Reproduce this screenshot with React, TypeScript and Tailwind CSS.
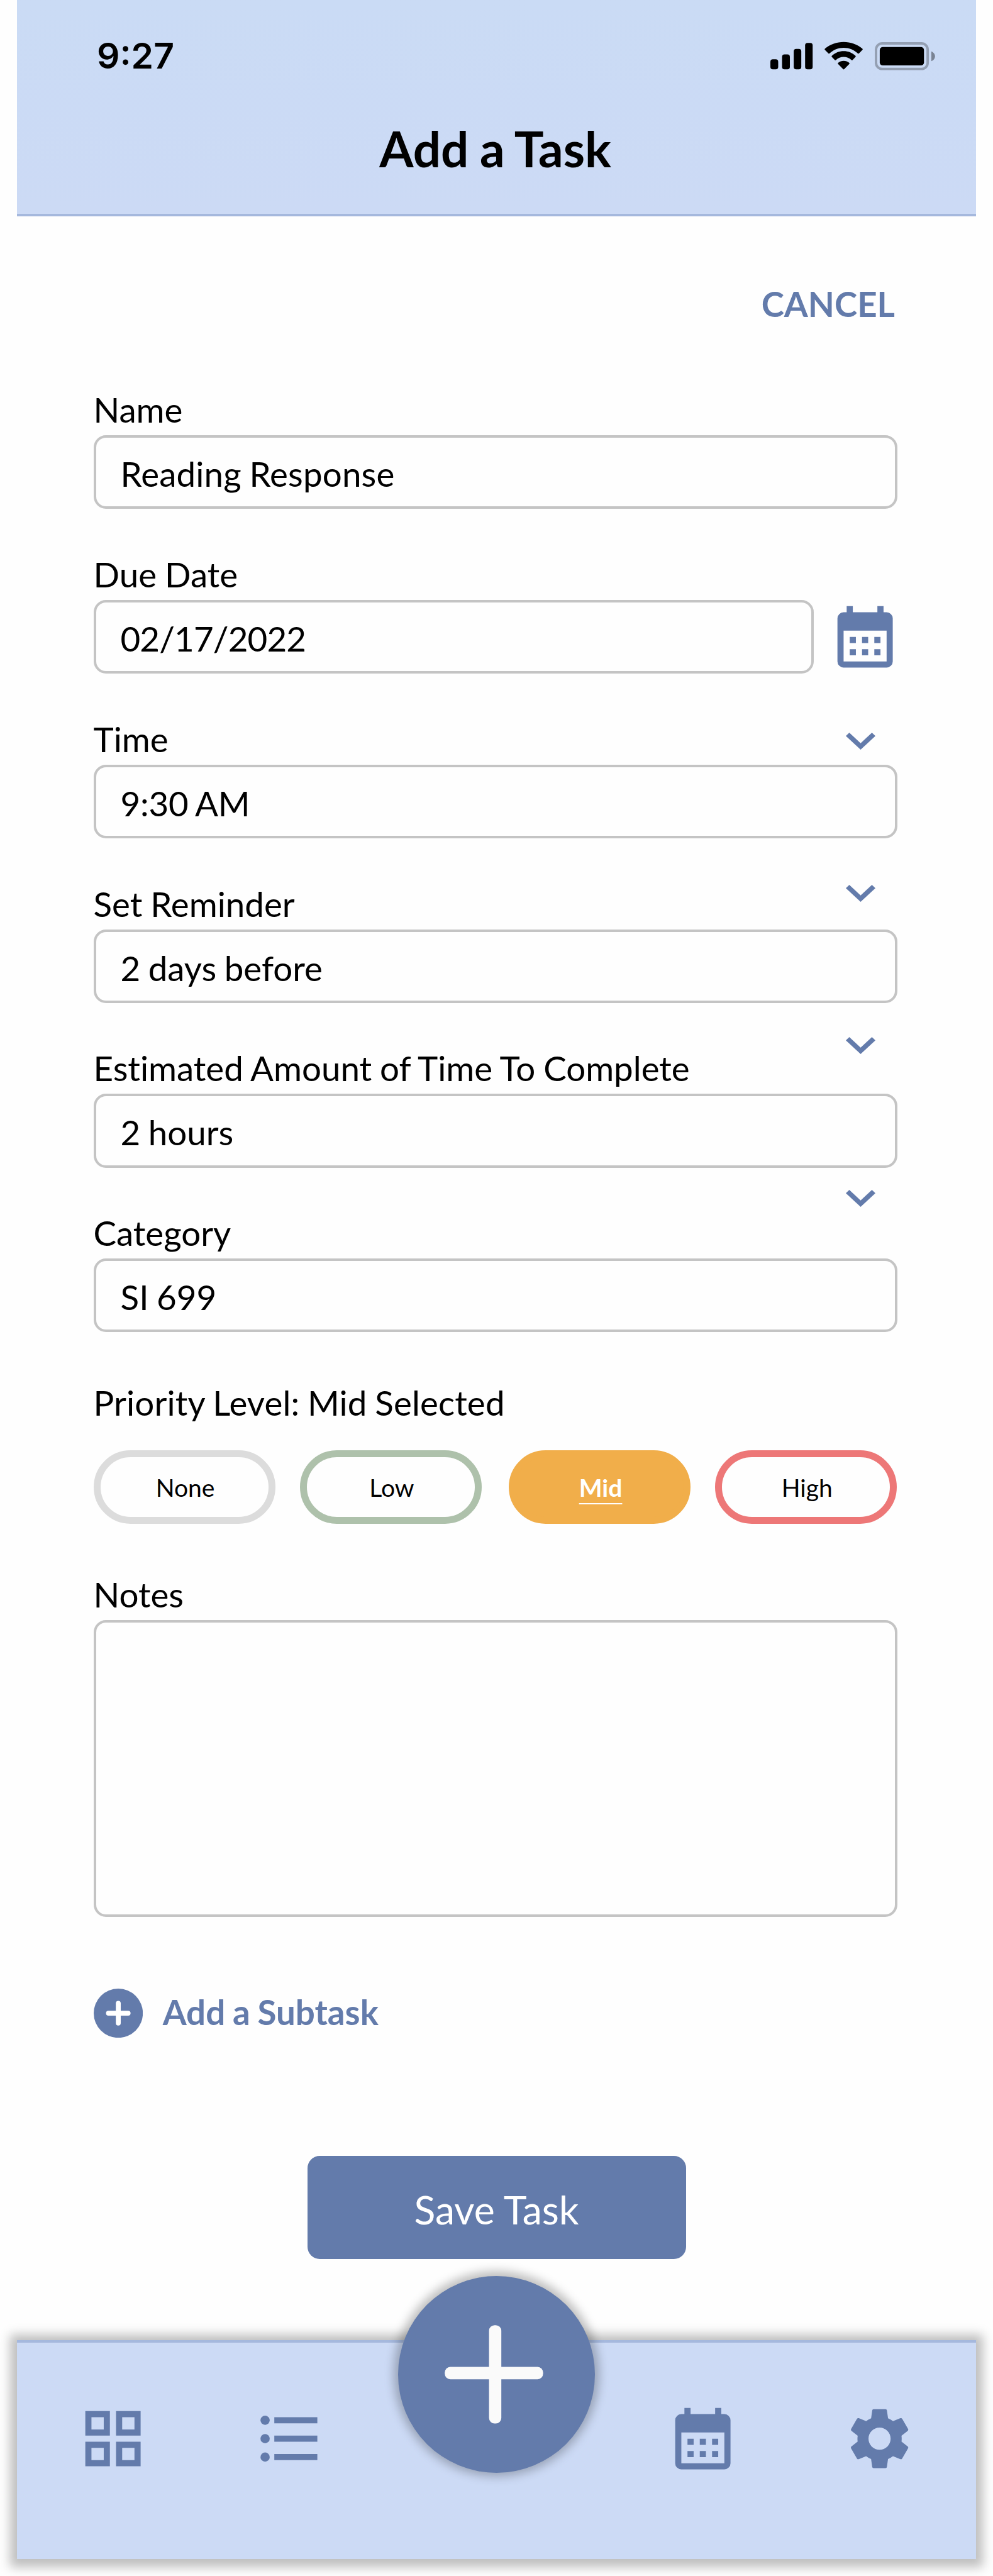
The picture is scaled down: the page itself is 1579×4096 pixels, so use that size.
import type { ReactNode } from "react";

const BLUE = "#637bab";

function Chevron({ className }: { className: string }) {
  return (
    <svg
      viewBox="6 8.59 12 7.41"
      preserveAspectRatio="none"
      fill={BLUE}
      className={`absolute left-[1196px] h-[27px] w-[47px] ${className}`}
    >
      <path d="M7.41 8.59 12 13.17l4.59-4.58L18 10l-6 6-6-6z" />
    </svg>
  );
}

function CalendarIcon() {
  return (
    <svg viewBox="0 0 24 24" fill={BLUE} fillRule="evenodd" className="size-[117.25px] shrink-0">
      <path d="M6 2h2v2h8V2h2v2h1a2 2 0 0 1 2 2v14a2 2 0 0 1-2 2H5a2 2 0 0 1-2-2V6a2 2 0 0 1 2-2h1zM5 10v10h14V10zM7 12h2v2H7zM11 12h2v2h-2zM15 12h2v2h-2zM7 16h2v2H7zM11 16h2v2h-2zM15 16h2v2h-2z" />
    </svg>
  );
}

function GridIcon() {
  return (
    <svg viewBox="0 0 24 24" fill={BLUE} fillRule="evenodd" className="size-[117.25px]">
      <path d="M3 3h8v8H3zM5 5v4h4V5zM13 3h8v8h-8zM15 5v4h4V5zM3 13h8v8H3zM5 15v4h4v-4zM13 13h8v8h-8zM15 15v4h4v-4z" />
    </svg>
  );
}

function ListIcon() {
  return (
    <svg viewBox="0 0 24 24" fill={BLUE} className="size-[117.25px]">
      <circle cx="4" cy="6" r="1.5" />
      <circle cx="4" cy="12" r="1.5" />
      <circle cx="4" cy="18" r="1.5" />
      <path d="M7 5h14v2H7zM7 11h14v2H7zM7 17h14v2H7z" />
    </svg>
  );
}

function GearIcon() {
  return (
    <svg viewBox="0 0 24 24" fill={BLUE} className="size-[117.25px]">
      <path d="M19.14 12.94c.04-.3.06-.61.06-.94 0-.32-.02-.64-.07-.94l2.03-1.58c.18-.14.23-.41.12-.61l-1.92-3.32c-.12-.22-.37-.29-.59-.22l-2.39.96c-.5-.38-1.03-.7-1.62-.94l-.36-2.54c-.04-.24-.24-.41-.48-.41h-3.84c-.24 0-.43.17-.47.41l-.36 2.54c-.59.24-1.13.57-1.62.94l-2.39-.96c-.22-.08-.47 0-.59.22L2.74 8.87c-.12.21-.08.47.12.61l2.03 1.58c-.05.3-.09.63-.09.94s.02.64.07.94l-2.03 1.58c-.18.14-.23.41-.12.61l1.92 3.32c.12.22.37.29.59.22l2.39-.96c.5.38 1.03.7 1.62.94l.36 2.54c.05.24.24.41.48.41h3.84c.24 0 .44-.17.47-.41l.36-2.54c.59-.24 1.13-.56 1.62-.94l2.39.96c.22.08.47 0 .59-.22l1.92-3.32c.12-.22.07-.47-.12-.61l-2.01-1.58zM12 15.6c-1.98 0-3.6-1.62-3.6-3.6s1.62-3.6 3.6-3.6 3.6 1.62 3.6 3.6-1.62 3.6-3.6 3.6z" />
    </svg>
  );
}

function StatusIcons() {
  return (
    <svg viewBox="1254 68 270 48" className="h-[46.9px] w-[263.8px]">
      <rect x="1254" y="97" width="12.7" height="16.3" rx="4" />
      <rect x="1273" y="89" width="12.7" height="24.3" rx="4" />
      <rect x="1292" y="80" width="12.3" height="33.3" rx="4" />
      <rect x="1310.5" y="70.3" width="12.3" height="43" rx="4" />
      <path d="M1373.3 78.2c8.6 0 16.9 3.3 23.1 9.2.5.4 1.2.4 1.7 0l5.8-5.9c.5-.5.5-1.3 0-1.8-17.1-14.5-44.1-14.5-61.2 0-.5.5-.5 1.3 0 1.8l5.8 5.9c.5.4 1.2.4 1.7 0 6.2-5.9 14.5-9.2 23.1-9.2z" />
      <path d="M1373.3 93.2c4.7 0 9.2 1.7 12.7 4.9.5.5 1.3.5 1.7 0l4.9-5c.5-.5.5-1.3 0-1.8-10.9-10.1-27.7-10.1-38.6 0-.5.5-.5 1.3 0 1.8l4.9 5c.4.5 1.2.5 1.7 0 3.5-3.2 8-4.9 12.7-4.9z" />
      <path d="M1382.4 104.5c.5-.5.5-1.3 0-1.7-5.3-4.3-12.9-4.3-18.2 0-.5.4-.5 1.2 0 1.7l8.3 8.6c.5.5 1.2.5 1.6 0z" />
      <rect x="1426" y="71" width="84" height="41.7" rx="10" fill="none" stroke="#000" strokeOpacity=".27" strokeWidth="4" />
      <path d="M1516 84v16c3.5-1.3 6-4.5 6-8s-2.5-6.7-6-8z" fillOpacity=".4" />
      <rect x="1432" y="77" width="72" height="30" rx="5" />
    </svg>
  );
}

type FieldProps = { label: string; value: string; valueClass?: string; trailing?: ReactNode };

function Field({ label, value, valueClass = "", trailing }: FieldProps) {
  return (
    <div className="h-[261.85px]">
      <div className="h-[98px] text-[54.7px] leading-[114px] [word-spacing:-1px]">{label}</div>
      <div className="flex gap-[23.4px]">
        <div
          className={`h-[117.2px] flex-1 rounded-[19.5px] border-4 border-[#c4c4c4] pl-[39px] text-[54.7px] leading-[115px] ${valueClass}`}
        >
          {value}
        </div>
        {trailing}
      </div>
    </div>
  );
}

const PILL =
  "flex h-[117.2px] w-[289.2px] items-center justify-center rounded-full border-[11.7px] pl-[3px] text-[39.1px] leading-[39px]";

export default function App() {
  return (
    <div className="flex h-[4096px] w-[1579px] flex-col overflow-hidden bg-[#fefefe] font-['Lato',sans-serif] text-black [font-variant-ligatures:no-common-ligatures] [word-spacing:-1.5px]">
      <header className="mx-[27.4px] h-[344px] shrink-0 border-b-4 border-[#a5b8dd] bg-linear-to-b from-[#cadbf5] to-[#ccdaf5]">
        <div className="flex h-[176px] items-start justify-between pl-[126.6px] pr-[62.5px]">
          <div className="pt-[58px] font-['Inter',sans-serif] text-[57px] font-semibold leading-[62px]">9:27</div>
          <div className="pt-[66.4px]">
            <StatusIcons />
          </div>
        </div>
        <h1 className="mt-[21px] pr-[4px] text-center text-[78.2px] font-bold leading-[78px]">Add a Task</h1>
      </header>

      <main className="relative mx-[148.5px] w-[1278px] grow">
        <div className="flex h-[250px] justify-end pt-[109px] pr-[3.5px] text-[54.7px] font-bold leading-[60px] text-[#637bab]">
          CANCEL
        </div>
        <Field label="Name" value="Reading Response" valueClass="tracking-[0.15px]" />
        <Field
          label="Due Date"
          value="02/17/2022"
          valueClass="tracking-[-0.85px]"
          trailing={
            <div className="-mr-[8px] w-[117.25px]">
              <CalendarIcon />
            </div>
          }
        />
        <Field label="Time" value="9:30 AM" valueClass="tracking-[-0.2px]" />
        <Field label="Set Reminder" value="2 days before" />
        <Field label="Estimated Amount of Time To Complete" value="2 hours" />
        <Field label="Category" value="SI 699" />
        <Chevron className="top-[821px]" />
        <Chevron className="top-[1063px]" />
        <Chevron className="top-[1305px]" />
        <Chevron className="top-[1548px]" />

        <div className="h-[140.8px] text-[54.7px] leading-[130px] tracking-[0.15px]">Priority Level: Mid Selected</div>
        <div className="flex">
          <button className={`${PILL} mr-[39.1px] border-[#dcdcdc]`}>None</button>
          <button className={`${PILL} mr-[43px] border-[#aec1ab]`}>Low</button>
          <button
            className={`${PILL} mr-[39.1px] border-[#f1ae4a] bg-[#f1ae4a] font-bold text-white underline decoration-[2px] underline-offset-[10px]`}
          >
            Mid
          </button>
          <button className={`${PILL} border-[#ed7777]`}>High</button>
        </div>

        <div className="mt-[54.5px] h-[98px] text-[54.7px] leading-[114px]">Notes</div>
        <div className="h-[472.9px] rounded-[19.5px] border-4 border-[#c4c4c4]" />

        <div className="mt-[113.4px] flex h-[78.2px] items-center gap-[32px] text-[54.7px] font-bold text-[#637bab]">
          <svg viewBox="0 0 80 80" className="size-[78.2px]">
            <circle cx="40" cy="40" r="40" fill={BLUE} />
            <path d="M40 24v32M24 40h32" stroke="#fff" strokeWidth="8" strokeLinecap="round" />
          </svg>
          <span className="pb-[4px]">Add a Subtask</span>
        </div>

        <button className="mt-[187.6px] ml-[340px] flex h-[164px] w-[602px] items-center justify-center rounded-[19.5px] bg-[#637bab] pt-[6px] text-[62.5px] text-white">
          Save Task
        </button>
      </main>

      <nav className="relative mx-[27.4px] mb-[27.4px] flex h-[347.8px] shrink-0 border-t-4 border-[#a5b8dd] bg-[#ccdaf5] pt-[94px] pl-[93.8px] shadow-[0_2px_16px_11px_rgba(0,0,0,0.25)]">
        <GridIcon />
        <div className="ml-[164px]">
          <ListIcon />
        </div>
        <div className="ml-[539.3px]">
          <CalendarIcon />
        </div>
        <div className="ml-[164px]">
          <GearIcon />
        </div>
        <button className="absolute -top-[105.6px] left-[605.8px] size-[312.7px] rounded-full bg-[#637bab] shadow-[0_-1px_15px_7px_rgba(0,0,0,0.25)]">
          <svg viewBox="0 0 320 320" className="size-full">
            <rect x="148" y="80" width="20" height="160" rx="9" fill="#fafafa" />
            <rect x="76" y="148" width="160" height="20" rx="9" fill="#fafafa" />
          </svg>
        </button>
      </nav>
    </div>
  );
}
